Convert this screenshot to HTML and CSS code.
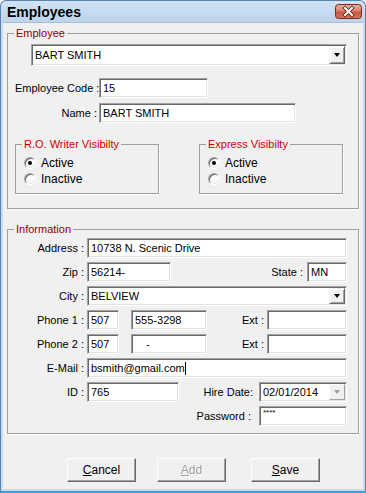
FILE: index.html
```html
<!DOCTYPE html>
<html lang="en">
<head>
<meta charset="UTF-8">
<meta name="viewport" content="width=device-width, initial-scale=1.0">
<title>Employees</title>
<link rel="stylesheet" href="styles.css">
</head>
<body>
<div class="window">
    <div class="titlebar">
        <span class="title">Employees</span>
        <span class="close">
            <svg width="27" height="15" viewBox="0 0 27 15">
                <defs>
                    <linearGradient id="red" x1="0" y1="0" x2="0" y2="1">
                        <stop offset="0" stop-color="#eab0a2"/>
                        <stop offset="0.45" stop-color="#d9806c"/>
                        <stop offset="0.55" stop-color="#c75a42"/>
                        <stop offset="1" stop-color="#d2745c"/>
                    </linearGradient>
                </defs>
                <rect x="0.5" y="0.5" width="26" height="14" rx="3" fill="url(#red)" stroke="#7a2a1c"/>
                <path d="M10 4 L17 11 M17 4 L10 11" stroke="#5a1a10" stroke-width="3.6" stroke-linecap="square"/>
                <path d="M10 4 L17 11 M17 4 L10 11" stroke="#fff" stroke-width="2" stroke-linecap="square"/>
            </svg>
        </span>
    </div>

    <div class="client">
        <!-- employee -->
        <fieldset class="group">
            <legend class="legend dark">Employee</legend>
            <div class="emp-body">
                <div class="combo emp-combo">
                    <span class="combo-text">BART SMITH</span>
                    <span class="drop"><i class="tri"></i></span>
                </div>
                <div class="row code-row">
                    <span class="lbl emp-lbl">Employee Code :</span>
                    <div class="field w-code">15</div>
                </div>
                <div class="row name-row">
                    <span class="lbl emp-lbl">Name :</span>
                    <div class="field w-name">BART SMITH</div>
                </div>
                <div class="subgroups">
                    <fieldset class="group sub">
                        <legend class="legend bright">R.O. Writer Visibilty</legend>
                        <div class="sub-body">
                            <div class="opt"><span class="radio on"></span>Active</div>
                            <div class="opt"><span class="radio"></span>Inactive</div>
                        </div>
                    </fieldset>
                    <fieldset class="group sub">
                        <legend class="legend bright">Express Visibilty</legend>
                        <div class="sub-body">
                            <div class="opt"><span class="radio on"></span>Active</div>
                            <div class="opt"><span class="radio"></span>Inactive</div>
                        </div>
                    </fieldset>
                </div>
            </div>
        </fieldset>

        <!-- information -->
        <fieldset class="group info">
            <legend class="legend dark">Information</legend>
            <div class="info-body">
                <div class="row">
                    <span class="lbl info-lbl">Address :</span>
                    <div class="field full">10738 N. Scenic Drive</div>
                </div>
                <div class="row">
                    <span class="lbl info-lbl">Zip :</span>
                    <div class="field w-zip">56214-</div>
                    <span class="lbl state-lbl">State :</span>
                    <div class="field w-state">MN</div>
                </div>
                <div class="row">
                    <span class="lbl info-lbl">City :</span>
                    <div class="combo full">
                        <span class="combo-text">BELVIEW</span>
                        <span class="drop"><i class="tri"></i></span>
                    </div>
                </div>
                <div class="row">
                    <span class="lbl info-lbl">Phone 1 :</span>
                    <div class="field w-area">507</div>
                    <div class="field w-num">555-3298</div>
                    <span class="lbl ext-lbl">Ext :</span>
                    <div class="field w-ext"></div>
                </div>
                <div class="row">
                    <span class="lbl info-lbl">Phone 2 :</span>
                    <div class="field w-area">507</div>
                    <div class="field w-num"><span class="dash">-</span></div>
                    <span class="lbl ext-lbl">Ext :</span>
                    <div class="field w-ext"></div>
                </div>
                <div class="row">
                    <span class="lbl info-lbl">E-Mail :</span>
                    <div class="field full">bsmith@gmail.com<span class="caret"></span></div>
                </div>
                <div class="row">
                    <span class="lbl info-lbl">ID :</span>
                    <div class="field w-id">765</div>
                    <span class="lbl hire-lbl">Hire Date:</span>
                    <div class="combo w-date">
                        <span class="combo-text">02/01/2014</span>
                        <span class="drop off"><i class="tri"></i></span>
                    </div>
                </div>
                <div class="row">
                    <span class="lbl pass-lbl">Password :</span>
                    <div class="field w-date"><span class="stars">****</span></div>
                </div>
            </div>
        </fieldset>

        <div class="buttons">
            <button class="btn cancel"><u>C</u>ancel</button>
            <button class="btn add" disabled><u>A</u>dd</button>
            <button class="btn save"><u>S</u>ave</button>
        </div>
    </div>
</div>
</body>
</html>
```

FILE: styles.css
```css
* {
    box-sizing: border-box;
}

body {
    margin: 0;
    font-family: "Liberation Sans", Arial, sans-serif;
    font-size: 11px;
    color: #000;
}

.window {
    width: 366px;
    height: 493px;
    display: flex;
    flex-direction: column;
    background: #c6dbf0;
    border: 1px solid #5c82ab;
    border-bottom: 2px solid #3d9fda;
    border-radius: 6px 6px 0 0;
}

.titlebar {
    height: 21px;
    display: flex;
    align-items: center;
    justify-content: space-between;
    padding: 0 3px 0 6px;
    background: linear-gradient(#d2e3f5, #bcd4ec);
    border-radius: 6px 6px 0 0;
}

.title {
    font-size: 14px;
    font-weight: bold;
    color: #000;
}

.close {
    display: flex;
}

.client {
    flex: 1;
    margin: 0 2px 2px 2px;
    padding: 0 4px;
    background: #f0f0f0;
    border-top: 1px solid #a9bfd6;
}

/* group boxes */
.group {
    margin: 0;
    padding: 0;
    min-width: 0;
    border: 1px solid #a0a0a0;
    box-shadow: 1px 1px 0 #fff;
}

.legend {
    margin-left: 6px;
    padding: 0 2px;
    line-height: 14px;
}

.dark {
    color: #8b0000;
}

.bright {
    color: #d00000;
}

.client > .group:first-child {
    margin-top: 3px;
}

.emp-body {
    padding: 4px 11px 14px 7px;
}

.info {
    margin-top: 13px;
}

.info-body {
    display: flex;
    flex-direction: column;
    gap: 4px;
    padding: 2px 11px 7px 7px;
}

/* rows and labels */
.row {
    display: flex;
    align-items: center;
    height: 20px;
}

.code-row {
    margin-top: 12px;
}

.name-row {
    margin-top: 5px;
}

.lbl {
    text-align: right;
    white-space: nowrap;
}

.emp-lbl {
    width: 82px;
    margin-right: 2px;
}

.info-lbl {
    width: 69px;
    margin-right: 3px;
}

.state-lbl {
    margin-left: auto;
    margin-right: 4px;
}

.ext-lbl {
    margin-left: auto;
    margin-right: 3px;
}

.hire-lbl {
    margin-left: auto;
    margin-right: 6px;
}

.pass-lbl {
    margin-left: auto;
    margin-right: 8px;
}

/* text boxes */
.field {
    height: 20px;
    background: #fff;
    border: 1px solid;
    border-color: #a0a0a0 #fff #fff #a0a0a0;
    box-shadow: inset 1px 1px 0 #696969, inset -1px -1px 0 #e3e3e3;
    padding: 0 3px;
    line-height: 18px;
    white-space: nowrap;
    overflow: hidden;
}

.full {
    flex: 1;
}

.w-code {
    width: 109px;
}

.w-name {
    width: 197px;
}

.w-zip {
    width: 84px;
}

.w-state {
    width: 40px;
}

.w-area {
    width: 32px;
}

.w-num {
    width: 76px;
    margin-left: 12px;
}

.w-ext {
    width: 80px;
}

.w-id {
    width: 92px;
}

.w-date {
    width: 88px;
}

.dash {
    margin-left: 11px;
}

.caret {
    display: inline-block;
    width: 1px;
    height: 13px;
    background: #000;
    vertical-align: -3px;
}

.stars {
    font-size: 8px;
    line-height: 12px;
    vertical-align: top;
}

/* combo boxes */
.combo {
    display: flex;
    align-items: stretch;
    height: 20px;
    background: #fff;
    border: 1px solid;
    border-color: #a0a0a0 #fff #fff #a0a0a0;
    box-shadow: inset 1px 1px 0 #696969, inset -1px -1px 0 #e3e3e3;
    padding: 1px;
}

.emp-combo {
    margin-left: 16px;
    height: 22px;
}

.combo-text {
    flex: 1;
    padding-left: 2px;
    display: flex;
    align-items: center;
    white-space: nowrap;
}

.drop {
    width: 16px;
    display: flex;
    align-items: center;
    justify-content: center;
    background: #f0f0f0;
    border: 1px solid;
    border-color: #f0f0f0 #696969 #696969 #f0f0f0;
    box-shadow: inset 1px 1px 0 #fff, inset -1px -1px 0 #a0a0a0;
}

.tri {
    width: 0;
    height: 0;
    border-top: 4px solid #000;
    border-left: 3.5px solid transparent;
    border-right: 3.5px solid transparent;
}

.drop.off {
    border-color: #fff #a0a0a0 #a0a0a0 #fff;
    box-shadow: none;
}

.drop.off .tri {
    border-top-color: #a0a0a0;
}

/* radio groups */
.subgroups {
    display: flex;
    gap: 40px;
    margin-top: 14px;
}

.sub {
    width: 144px;
}

.sub-body {
    padding: 5px 0 8px 8px;
}

.opt {
    display: flex;
    align-items: center;
    gap: 5px;
    height: 13px;
    font-size: 12px;
}

.opt + .opt {
    margin-top: 3px;
}

.radio {
    width: 12px;
    height: 12px;
    border-radius: 50%;
    background: #fff;
    border: 1px solid;
    border-color: #a0a0a0 #fff #fff #a0a0a0;
    box-shadow: inset 1px 1px 0 #696969, inset -1px -1px 0 #e3e3e3;
    display: flex;
    align-items: center;
    justify-content: center;
}

.radio.on::after {
    content: "";
    width: 4px;
    height: 4px;
    border-radius: 50%;
    background: #000;
}

/* buttons */
.buttons {
    display: flex;
    margin-top: 24px;
    padding-left: 60px;
}

.btn {
    width: 69px;
    height: 24px;
    padding: 0;
    font-family: inherit;
    font-size: 12px;
    color: #000;
    background: #f0f0f0;
    border: 1px solid;
    border-color: #fff #696969 #696969 #fff;
    box-shadow: inset -1px -1px 0 #a0a0a0;
    border-radius: 0;
}

.add {
    margin-left: 21px;
    color: #a0a0a0;
    text-shadow: 1px 1px 0 #fff;
}

.save {
    margin-left: 25px;
}
```
